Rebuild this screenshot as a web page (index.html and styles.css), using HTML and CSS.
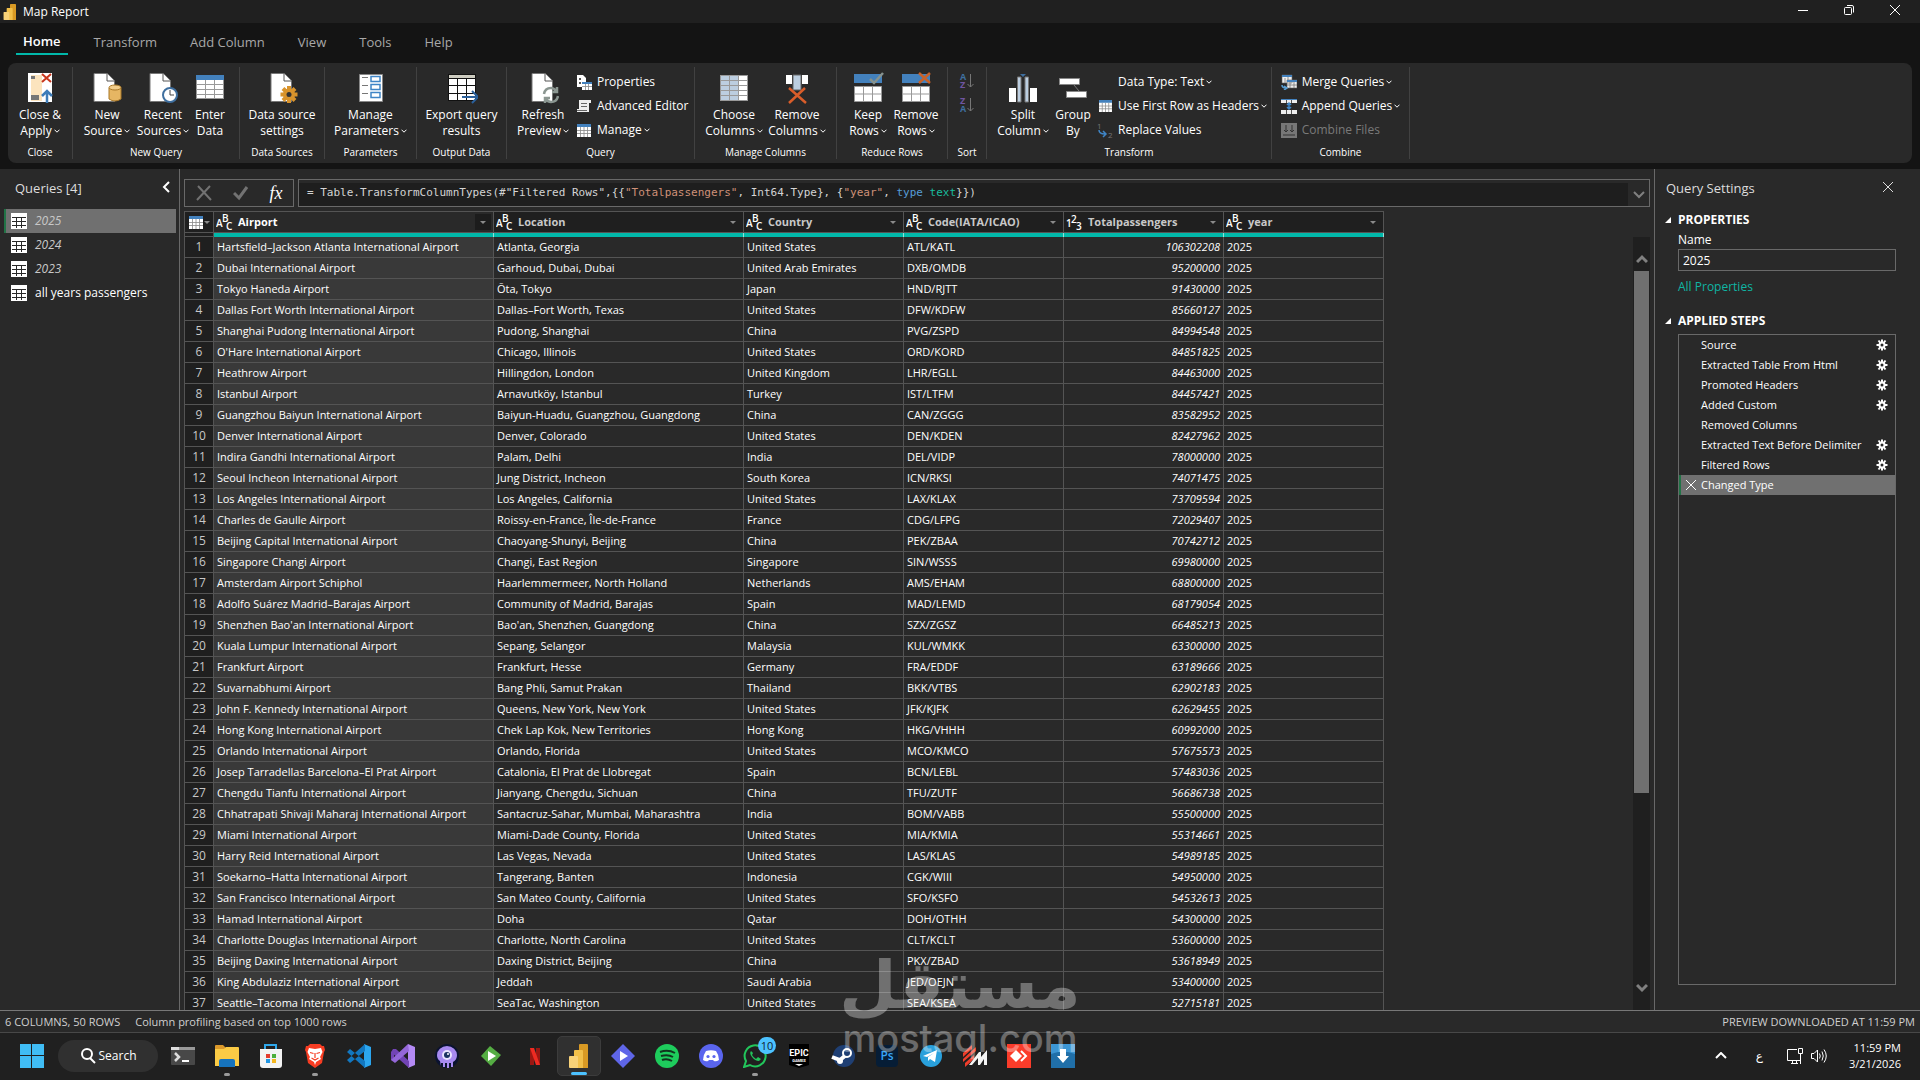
FILE: index.html
```html
<!DOCTYPE html>
<html lang="en">
<head>
<meta charset="utf-8">
<meta name="viewport" content="width=device-width, initial-scale=1">
<title>Map Report</title>
<link rel="stylesheet" href="styles.css">
</head>
<body>
<svg class="defs" aria-hidden="true">
  <symbol id="chev" viewBox="0 0 6 4"><path d="M.5 .7 3 3.2 5.5 .7" fill="none" stroke="currentColor"/></symbol>
  <symbol id="page" viewBox="0 0 32 32"><path d="M2 1.500H15L22.500 9V29.500H2z" fill="#fff" stroke="#777"/><path d="M15 1.500V9H22.500" fill="#fff" stroke="#555"/></symbol>
  <symbol id="grid" viewBox="0 0 16 16"><path d="M0 0H16V16H0z" fill="#fff"/><path d="M1 4.500H15M1 8.500H15M1 12.500H15M5.500 4V15M10.500 4V15" stroke="#292929" fill="none"/></symbol>
  <symbol id="bluegrid" viewBox="0 0 14 13"><path d="M0 0H14V13H0z" fill="#fff"/><path d="M0 0H14V3H0z" fill="#4381bd"/><path d="M0 6.500H14M0 9.500H14M3.500 3V13M7 3V13M10.500 3V13" stroke="#888" stroke-width=".8"/></symbol>
  <symbol id="gear" viewBox="0 0 12 12"><path d="M6 .5V11.500M.5 6H11.500M2.500 1.500 9.500 10.500M9.500 1.500 2.500 10.500" stroke="#fff" stroke-width="2"/><circle cx="6" cy="6" r="3.500" fill="#fff"/><circle cx="6" cy="6" r="1.500" fill="#292929"/></symbol>
  <symbol id="cross" viewBox="0 0 12 12"><path d="M1 1 11 11M11 1 1 11" stroke="currentColor" fill="none"/></symbol>
  <symbol id="pbi" viewBox="0 0 20 24"><path d="M10 1q0-1 1-1h7q1 0 1 1v23h-9z" fill="#d99a24"/><path d="M5 7q0-1 1-1h7q1 0 1 1v17H5z" fill="#f2c04a"/><path d="M0 13q0-1 1-1h7q1 0 1 1v11H1q-1 0-1-1z" fill="#f8d278"/></symbol>
</svg>

<header class="titlebar">
  <svg class="app-icon" viewBox="0 0 20 24"><use href="#pbi"/></svg>
  <h1>Map Report</h1>
  <div class="winbtns">
    <button aria-label="Minimize"><svg width="12" height="12"><path d="M1 6.500H11" stroke="#fff"/></svg></button>
    <button aria-label="Restore"><svg width="12" height="12" fill="none" stroke="#fff"><rect x="1.500" y="3.500" width="7" height="7" rx="1"/><path d="M4 1.500H9q1.500 0 1.500 1.500V8.500"/></svg></button>
    <button aria-label="Close"><svg width="12" height="12"><use href="#cross"/></svg></button>
  </div>
</header>

<nav class="tabs">
  <button class="tab active">Home</button><button class="tab">Transform</button><button class="tab">Add Column</button><button class="tab">View</button><button class="tab">Tools</button><button class="tab">Help</button>
</nav>

<section class="ribbon">
  <div class="group g-close"><div class="tools">
    <button class="big"><svg viewBox="0 0 32 32"><path d="M4 1H28V30H4z" fill="#fff"/><path d="M7 3H18V29H7z" fill="#fce4be"/><path d="M7 4H11V7H7zM7 23H15V28H7z" fill="#777"/><path d="M18 2 27 10M27 2 18 10" stroke="#c8361c" stroke-width="2"/><path d="M23 31V20M18 24 23 19 28 24" stroke="#3e7cb8" stroke-width="2.500" fill="none"/></svg><span>Close &amp;<br>Apply<svg class="chev"><use href="#chev"/></svg></span></button>
  </div><h2>Close</h2></div>

  <div class="group g-new"><div class="tools">
    <button class="big"><svg viewBox="0 0 32 32"><use href="#page" x="1" y="0"/><path d="M18 16V27q6 4 12 0V16z" fill="#e6b663" stroke="#a97828"/><ellipse cx="24" cy="15.500" rx="6" ry="2.500" fill="#f2cd8a" stroke="#a97828"/></svg><span>New<br>Source<svg class="chev"><use href="#chev"/></svg></span></button>
    <button class="big"><svg viewBox="0 0 32 32"><use href="#page" x="1" y="0"/><circle cx="23" cy="23" r="7" fill="#fff" stroke="#3f6f9f" stroke-width="2"/><path d="M23 18V23H27" stroke="#444" fill="none"/></svg><span>Recent<br>Sources<svg class="chev"><use href="#chev"/></svg></span></button>
    <button class="big narrow"><svg viewBox="0 0 32 32"><path d="M2 3H30V27H2z" fill="#fff"/><path d="M2 3H30V8H2z" fill="#4381bd"/><path d="M2 12.500H30M2 17.500H30M2 22.500H30M11.500 8V27M20.500 8V27M2.500 8V27M29.500 8V27M2 26.500H30" stroke="#999"/></svg><span>Enter<br>Data</span></button>
  </div><h2>New Query</h2></div>

  <div class="group g-ds"><div class="tools">
    <button class="big wide"><svg viewBox="0 0 32 32"><use href="#page" x="3" y="0"/><path d="M23 14V31M14.500 22.500H31.500M17 16.500 29 28.500M29 16.500 17 28.500" stroke="#d8932c" stroke-width="4"/><circle cx="23" cy="22.500" r="6" fill="#d8932c"/><circle cx="23" cy="22.500" r="2.500" fill="#333"/></svg><span>Data source<br>settings</span></button>
  </div><h2>Data Sources</h2></div>

  <div class="group g-par"><div class="tools">
    <button class="big wide"><svg viewBox="0 0 32 32"><path d="M4.500 2.500H27.500V29.500H4.500z" fill="#fff" stroke="#888"/><path d="M7 5.500H13M7 13.500H13M7 21.500H13" stroke="#777"/><path d="M16 4.500H25V9.500H16zM16 12.500H25V17.500H16zM16 20.500H25V25.500H16z" fill="none" stroke="#3f85c6" stroke-width="1.500"/></svg><span>Manage<br>Parameters<svg class="chev"><use href="#chev"/></svg></span></button>
  </div><h2>Parameters</h2></div>

  <div class="group g-out"><div class="tools">
    <button class="big wide"><svg viewBox="0 0 32 32"><path d="M2 2H30V29H2z" fill="#fff"/><path d="M2 3H30V6H2z" fill="#cdccc0"/><path d="M2 2.500H30M2 6.500H30M2 13.500H30M2 21.500H30M2 28.500H30M2.500 2V29M11.500 6V29M20.500 6V29M29.500 2V29" stroke="#111"/><path d="M16 25H31M26 19 32 25 26 31" stroke="#2a609c" stroke-width="2" fill="none"/></svg><span>Export query<br>results</span></button>
  </div><h2>Output Data</h2></div>

  <div class="group g-query"><div class="tools">
    <button class="big"><svg viewBox="0 0 32 32"><use href="#page" x="3" y="0"/><path d="M17 22q1-6 7-6 3 0 5 3M30 15V20H25M31 24q-1 6-7 6-3 0-5-3M18 31V26H23" stroke="#8b9691" stroke-width="2.500" fill="none"/></svg><span>Refresh<br>Preview<svg class="chev"><use href="#chev"/></svg></span></button>
    <div class="list">
      <button><svg viewBox="0 0 16 16"><path d="M1 1H7L10 4V13H1z" fill="#fff"/><path d="M3 5H5M3 9H5" stroke="#555" stroke-width="2"/><path d="M6 8H16V16H6z" fill="#fff"/><path d="M6 8H16V10H6z" fill="#4381bd"/><path d="M6 12.500H16M9.500 10V16M12.500 10V16" stroke="#888" stroke-width=".8"/></svg>Properties</button>
      <button><svg viewBox="0 0 16 16"><path d="M3 2H15V5H13V14H1V11H3z" fill="#eee"/><path d="M5 5.500H11M5 8.500H11M1 12.500H11" stroke="#666"/></svg>Advanced Editor</button>
      <button><svg viewBox="0 0 16 16"><use href="#bluegrid" x="1" y="2" width="14" height="13"/></svg>Manage<svg class="chev"><use href="#chev"/></svg></button>
    </div>
  </div><h2>Query</h2></div>

  <div class="group g-cols"><div class="tools">
    <button class="big"><svg viewBox="0 0 32 32"><path d="M2 3H30V29H2z" fill="#fff"/><path d="M2 3H20V29H2z" fill="#bccee0"/><path d="M2 3.500H30M2 8.500H30M2 13.500H30M2 18.500H30M2 23.500H30M2 28.500H30M2.500 3V29M11.500 3V29M20.500 3V29M29.500 3V29" stroke="#999"/></svg><span>Choose<br>Columns<svg class="chev"><use href="#chev"/></svg></span></button>
    <button class="big"><svg viewBox="0 0 32 32"><path d="M5 3H11V12H5zM21 3H27V12H21z" fill="#fff"/><path d="M12 3H20V18H12z" fill="#bccee0" stroke="#666"/><path d="M8 16 25 31M24 16 8 31" stroke="#d95d2a" stroke-width="2.500"/></svg><span>Remove<br>Columns<svg class="chev"><use href="#chev"/></svg></span></button>
  </div><h2>Manage Columns</h2></div>

  <div class="group g-rows"><div class="tools">
    <button class="big"><svg viewBox="0 0 32 32"><path d="M2 2H30V11H2z" fill="#4381bd"/><path d="M2.500 14.500H29.500V29.500H2.500zM2 22H30M11.500 14V30M20.500 14V30" fill="#fff" stroke="#999"/><path d="M18 7 22 11 31 1" stroke="#87938f" stroke-width="2.500" fill="none"/></svg><span>Keep<br>Rows<svg class="chev"><use href="#chev"/></svg></span></button>
    <button class="big"><svg viewBox="0 0 32 32"><path d="M2 2H30V11H2z" fill="#4381bd"/><path d="M2.500 14.500H29.500V29.500H2.500zM2 22H30M11.500 14V30M20.500 14V30" fill="#fff" stroke="#999"/><path d="M19 1 30 11M30 1 19 11" stroke="#c8622a" stroke-width="2.500"/></svg><span>Remove<br>Rows<svg class="chev"><use href="#chev"/></svg></span></button>
  </div><h2>Reduce Rows</h2></div>

  <div class="group g-sort"><div class="tools sort">
    <button aria-label="Sort ascending"><svg width="16" height="18" viewBox="0 0 16 18" font-family="Open Sans, sans-serif" font-size="9" font-weight="700"><text x="1" y="8" fill="#3f6f9f">A</text><text x="1" y="16" fill="#6f55a0">Z</text><path d="M11.500 2V15M8.500 12 11.500 15 14.500 12" stroke="#777" fill="none"/></svg></button>
    <button aria-label="Sort descending"><svg width="16" height="18" viewBox="0 0 16 18" font-family="Open Sans, sans-serif" font-size="9" font-weight="700"><text x="1" y="8" fill="#6f55a0">Z</text><text x="1" y="16" fill="#3f6f9f">A</text><path d="M11.500 2V15M8.500 12 11.500 15 14.500 12" stroke="#777" fill="none"/></svg></button>
  </div><h2>Sort</h2></div>

  <div class="group g-trans"><div class="tools">
    <button class="big"><svg viewBox="0 0 32 32"><path d="M2 16H9V30H2zM23 16H30V30H23z" fill="#fff"/><path d="M10.500 5H14V30H10.500zM18 5H21.500V30H18z" fill="#bccee0" stroke="#777"/><path d="M13 2H19L16 5z" fill="#3f6f9f"/></svg><span>Split<br>Column<svg class="chev"><use href="#chev"/></svg></span></button>
    <button class="big narrow"><svg viewBox="0 0 32 32"><path d="M2.500 6.500H22.500V12.500H2.500zM9.500 19.500H29.500V25.500H9.500z" fill="#fff" stroke="#888"/><path d="M17 13 22 19" stroke="#777"/></svg><span>Group<br>By</span></button>
    <div class="list">
      <button><svg viewBox="0 0 16 16"></svg>Data Type: Text<svg class="chev"><use href="#chev"/></svg></button>
      <button><svg viewBox="0 0 16 16"><use href="#bluegrid" x="2" y="2" width="13" height="12"/></svg>Use First Row as Headers<svg class="chev"><use href="#chev"/></svg></button>
      <button><svg viewBox="0 0 16 16"><g font-family="Open Sans, sans-serif" font-size="8" fill="#777"><text x="0" y="7">1</text><text x="11" y="16">2</text></g><path d="M2 8q0 4 6 4M6 9 9 12 6 15" stroke="#3f85c6" stroke-width="1.500" fill="none"/></svg>Replace Values</button>
    </div>
  </div><h2>Transform</h2></div>

  <div class="group g-comb"><div class="tools">
    <div class="list">
      <button><svg viewBox="0 0 16 16"><path d="M1 1H11V9H1zM6 6H16V14H6z" fill="#eee" stroke="#666" stroke-width=".6"/><path d="M1 1H11V3H1zM6 6H16V8H6z" fill="#4381bd"/><path d="M6 11H16M4 4V9M7 3V6M9 8V14M13 8V14" stroke="#777" stroke-width=".8"/><path d="M1 11q0 3 4 3M3 12 6 14 3 16" stroke="#5a9fd4" stroke-width="1.500" fill="none"/></svg>Merge Queries<svg class="chev"><use href="#chev"/></svg></button>
      <button><svg viewBox="0 0 16 16"><path d="M0 1H16V5H0zM0 12H16V16H0z" fill="#eee"/><path d="M0 1H16V2H0z" fill="#4381bd"/><path d="M5.500 2V5M10.500 2V5M5.500 12V16M10.500 12V16" stroke="#555"/><path d="M8 5V11M6 9 8 11 10 9M6 7 8 5 10 7" stroke="#3f85c6" stroke-width="1.500" fill="none"/></svg>Append Queries<svg class="chev"><use href="#chev"/></svg></button>
      <button class="off" disabled><svg viewBox="0 0 16 16"><path d="M0 1H16V16H0z" fill="#777"/><path d="M5 3V10M3 8 5 10 7 8M11 3V10M9 8 11 10 13 8M2 13H14" stroke="#333" fill="none"/></svg>Combine Files</button>
    </div>
  </div><h2>Combine</h2></div>
</section>

<main class="workspace">
  <aside class="queries">
    <div class="pane-head"><h2>Queries [4]</h2><button aria-label="Collapse"><svg width="8" height="12"><path d="M7 1 2 6 7 11" stroke="#fff" stroke-width="2" fill="none"/></svg></button></div>
    <ul>
      <li class="sel it"><svg><use href="#grid"/></svg>2025</li>
      <li class="it"><svg><use href="#grid"/></svg>2024</li>
      <li class="it"><svg><use href="#grid"/></svg>2023</li>
      <li><svg><use href="#grid"/></svg>all years passengers</li>
    </ul>
  </aside>

  <section class="editor">
    <div class="formula-row">
      <div class="fx-btns">
        <button aria-label="Cancel"><svg width="16" height="16"><path d="M2 1 15 15M14 1 1 15" stroke="#727272" stroke-width="2"/></svg></button>
        <button aria-label="Commit"><svg width="16" height="16"><path d="M1 8 6 13 14 2" stroke="#727272" stroke-width="3" fill="none"/></svg></button>
        <button class="fx">fx</button>
      </div>
      <div class="formula"><code>= Table.TransformColumnTypes(#"Filtered Rows",{{<i class="s">"Totalpassengers"</i>, Int64.Type}, {<i class="s">"year"</i>, <i class="k">type</i> <i class="t">text</i>}})</code><button aria-label="Expand"><svg width="12" height="8"><path d="M1 1 6 6 11 1" stroke="#808080" stroke-width="2" fill="none"/></svg></button></div>
    </div>
    <div class="grid-wrap">
      <table>
        <colgroup><col class="c-n"><col class="c-air"><col class="c-loc"><col class="c"><col class="c"><col class="c"><col class="c"></colgroup>
        <thead>
          <tr><th class="corner"><svg class="tbl" viewBox="0 0 14 13"><use href="#bluegrid"/></svg><i class="dd"></i></th>
          <th class="on"><div><svg class="ty" viewBox="0 0 17 17"><text x="0" y="13">A</text><text x="6" y="8">B</text><text x="10" y="16">C</text></svg>Airport<i class="dd"></i></div></th>
          <th><div><svg class="ty" viewBox="0 0 17 17"><text x="0" y="13">A</text><text x="6" y="8">B</text><text x="10" y="16">C</text></svg>Location<i class="dd"></i></div></th>
          <th><div><svg class="ty" viewBox="0 0 17 17"><text x="0" y="13">A</text><text x="6" y="8">B</text><text x="10" y="16">C</text></svg>Country<i class="dd"></i></div></th>
          <th><div><svg class="ty" viewBox="0 0 17 17"><text x="0" y="13">A</text><text x="6" y="8">B</text><text x="10" y="16">C</text></svg>Code(IATA/ICAO)<i class="dd"></i></div></th>
          <th><div><svg class="ty" viewBox="0 0 17 17"><text x="0" y="13">1</text><text x="5" y="9">2</text><text x="10" y="16">3</text></svg>Totalpassengers<i class="dd"></i></div></th>
          <th><div><svg class="ty" viewBox="0 0 17 17"><text x="0" y="13">A</text><text x="6" y="8">B</text><text x="10" y="16">C</text></svg>year<i class="dd"></i></div></th></tr>
          <tr class="band"><td><td><td><td><td><td><td></tr>
        </thead>
        <tbody>
<tr><td>1<td>Hartsfield–Jackson Atlanta International Airport<td>Atlanta, Georgia<td>United States<td>ATL/KATL<td>106302208<td>2025
<tr><td>2<td>Dubai International Airport<td>Garhoud, Dubai, Dubai<td>United Arab Emirates<td>DXB/OMDB<td>95200000<td>2025
<tr><td>3<td>Tokyo Haneda Airport<td>Ōta, Tokyo<td>Japan<td>HND/RJTT<td>91430000<td>2025
<tr><td>4<td>Dallas Fort Worth International Airport<td>Dallas–Fort Worth, Texas<td>United States<td>DFW/KDFW<td>85660127<td>2025
<tr><td>5<td>Shanghai Pudong International Airport<td>Pudong, Shanghai<td>China<td>PVG/ZSPD<td>84994548<td>2025
<tr><td>6<td>O'Hare International Airport<td>Chicago, Illinois<td>United States<td>ORD/KORD<td>84851825<td>2025
<tr><td>7<td>Heathrow Airport<td>Hillingdon, London<td>United Kingdom<td>LHR/EGLL<td>84463000<td>2025
<tr><td>8<td>Istanbul Airport<td>Arnavutköy, Istanbul<td>Turkey<td>IST/LTFM<td>84457421<td>2025
<tr><td>9<td>Guangzhou Baiyun International Airport<td>Baiyun-Huadu, Guangzhou, Guangdong<td>China<td>CAN/ZGGG<td>83582952<td>2025
<tr><td>10<td>Denver International Airport<td>Denver, Colorado<td>United States<td>DEN/KDEN<td>82427962<td>2025
<tr><td>11<td>Indira Gandhi International Airport<td>Palam, Delhi<td>India<td>DEL/VIDP<td>78000000<td>2025
<tr><td>12<td>Seoul Incheon International Airport<td>Jung District, Incheon<td>South Korea<td>ICN/RKSI<td>74071475<td>2025
<tr><td>13<td>Los Angeles International Airport<td>Los Angeles, California<td>United States<td>LAX/KLAX<td>73709594<td>2025
<tr><td>14<td>Charles de Gaulle Airport<td>Roissy-en-France, Île-de-France<td>France<td>CDG/LFPG<td>72029407<td>2025
<tr><td>15<td>Beijing Capital International Airport<td>Chaoyang-Shunyi, Beijing<td>China<td>PEK/ZBAA<td>70742712<td>2025
<tr><td>16<td>Singapore Changi Airport<td>Changi, East Region<td>Singapore<td>SIN/WSSS<td>69980000<td>2025
<tr><td>17<td>Amsterdam Airport Schiphol<td>Haarlemmermeer, North Holland<td>Netherlands<td>AMS/EHAM<td>68800000<td>2025
<tr><td>18<td>Adolfo Suárez Madrid–Barajas Airport<td>Community of Madrid, Barajas<td>Spain<td>MAD/LEMD<td>68179054<td>2025
<tr><td>19<td>Shenzhen Bao'an International Airport<td>Bao'an, Shenzhen, Guangdong<td>China<td>SZX/ZGSZ<td>66485213<td>2025
<tr><td>20<td>Kuala Lumpur International Airport<td>Sepang, Selangor<td>Malaysia<td>KUL/WMKK<td>63300000<td>2025
<tr><td>21<td>Frankfurt Airport<td>Frankfurt, Hesse<td>Germany<td>FRA/EDDF<td>63189666<td>2025
<tr><td>22<td>Suvarnabhumi Airport<td>Bang Phli, Samut Prakan<td>Thailand<td>BKK/VTBS<td>62902183<td>2025
<tr><td>23<td>John F. Kennedy International Airport<td>Queens, New York, New York<td>United States<td>JFK/KJFK<td>62629455<td>2025
<tr><td>24<td>Hong Kong International Airport<td>Chek Lap Kok, New Territories<td>Hong Kong<td>HKG/VHHH<td>60992000<td>2025
<tr><td>25<td>Orlando International Airport<td>Orlando, Florida<td>United States<td>MCO/KMCO<td>57675573<td>2025
<tr><td>26<td>Josep Tarradellas Barcelona–El Prat Airport<td>Catalonia, El Prat de Llobregat<td>Spain<td>BCN/LEBL<td>57483036<td>2025
<tr><td>27<td>Chengdu Tianfu International Airport<td>Jianyang, Chengdu, Sichuan<td>China<td>TFU/ZUTF<td>56686738<td>2025
<tr><td>28<td>Chhatrapati Shivaji Maharaj International Airport<td>Santacruz-Sahar, Mumbai, Maharashtra<td>India<td>BOM/VABB<td>55500000<td>2025
<tr><td>29<td>Miami International Airport<td>Miami-Dade County, Florida<td>United States<td>MIA/KMIA<td>55314661<td>2025
<tr><td>30<td>Harry Reid International Airport<td>Las Vegas, Nevada<td>United States<td>LAS/KLAS<td>54989185<td>2025
<tr><td>31<td>Soekarno–Hatta International Airport<td>Tangerang, Banten<td>Indonesia<td>CGK/WIII<td>54950000<td>2025
<tr><td>32<td>San Francisco International Airport<td>San Mateo County, California<td>United States<td>SFO/KSFO<td>54532613<td>2025
<tr><td>33<td>Hamad International Airport<td>Doha<td>Qatar<td>DOH/OTHH<td>54300000<td>2025
<tr><td>34<td>Charlotte Douglas International Airport<td>Charlotte, North Carolina<td>United States<td>CLT/KCLT<td>53600000<td>2025
<tr><td>35<td>Beijing Daxing International Airport<td>Daxing District, Beijing<td>China<td>PKX/ZBAD<td>53618949<td>2025
<tr><td>36<td>King Abdulaziz International Airport<td>Jeddah<td>Saudi Arabia<td>JED/OEJN<td>53400000<td>2025
<tr><td>37<td>Seattle–Tacoma International Airport<td>SeaTac, Washington<td>United States<td>SEA/KSEA<td>52715181<td>2025
        </tbody>
      </table>
      <div class="scrollbar"><svg width="12" height="10"><path d="M1 8 6 3 11 8" stroke="#808080" stroke-width="3" fill="none"/></svg><div class="track"><div class="thumb"></div></div><svg width="12" height="10"><path d="M1 2 6 7 11 2" stroke="#808080" stroke-width="3" fill="none"/></svg></div>
    </div>
  </section>

  <aside class="settings">
    <div class="pane-head"><h2>Query Settings</h2><button aria-label="Close pane"><svg width="12" height="12"><use href="#cross"/></svg></button></div>
    <h3>PROPERTIES</h3>
    <label for="qname">Name</label>
    <input id="qname" value="2025">
    <a href="#all">All Properties</a>
    <h3>APPLIED STEPS</h3>
    <ol>
      <li>Source<svg><use href="#gear"/></svg></li>
      <li>Extracted Table From Html<svg><use href="#gear"/></svg></li>
      <li>Promoted Headers<svg><use href="#gear"/></svg></li>
      <li>Added Custom<svg><use href="#gear"/></svg></li>
      <li>Removed Columns</li>
      <li>Extracted Text Before Delimiter<svg><use href="#gear"/></svg></li>
      <li>Filtered Rows<svg><use href="#gear"/></svg></li>
      <li class="sel"><svg class="del"><use href="#cross"/></svg>Changed Type</li>
    </ol>
  </aside>
</main>

<footer class="status"><span>6 COLUMNS, 50 ROWS</span><span>Column profiling based on top 1000 rows</span><span class="right">PREVIEW DOWNLOADED AT 11:59 PM</span></footer>

<footer class="taskbar">
  <button class="start" aria-label="Start"><svg width="24" height="24" fill="#40bdf5"><path d="M0 0H11V11H0zM12 0H24V11H12zM0 12H11V24H0zM12 12H24V24H12z"/></svg></button>
  <button class="search"><svg width="16" height="18" fill="none" stroke="#fff" stroke-width="2"><circle cx="7" cy="7" r="5"/><path d="M10 11 15 16"/></svg>Search</button>
  <div class="apps">
    <button aria-label="Terminal"><svg viewBox="0 0 24 24"><rect y="3" width="24" height="18" rx="1" fill="#484848"/><path d="M0 3H24V6H0z" fill="#999"/><path d="M0 3H8V6H0z" fill="#ddd"/><path d="M4 9 8 13 4 17" stroke="#ddd" stroke-width="2.500" fill="none"/><path d="M11 17H18" stroke="#fff" stroke-width="2"/></svg></button>
    <button aria-label="File Explorer" class="run"><svg viewBox="0 0 24 24"><path d="M0 2q0-1 1-1H8L11 4V9H0z" fill="#dc9a2c"/><path d="M0 5H9L11 3H23q1 0 1 1V22H0z" fill="#fbcb45"/><path d="M4 23V17q0-2 2-2H18q2 0 2 2V23z" fill="#1673bd"/></svg></button>
    <button aria-label="Store"><svg viewBox="0 0 24 24"><path d="M6 6V1H17V6" stroke="#2fa7ea" stroke-width="2" fill="none"/><path d="M1 5H23V21q0 3-3 3H4q-3 0-3-3z" fill="#f3f3f3"/><path d="M7 10H11V14H7z" fill="#e33d2f"/><path d="M13 10H17V14H13z" fill="#4caf3c"/><path d="M7 15H11V19H7z" fill="#2196e3"/><path d="M13 15H17V19H13z" fill="#f5b71e"/></svg></button>
    <button aria-label="Brave" class="run"><svg viewBox="0 0 24 24"><path d="M7 0H17L19 2 21 2 22 6 21 8 19 19 12 24 5 19 3 8 2 6 3 2 5 2z" fill="#f73c22"/><path d="M6 4 12 5 18 4 19.500 8 17 13 18 15 13 18 12 21 11 18 6 15 7 13 4.500 8z" fill="#fff"/><path d="M7 8.500 10.500 9.500M17 8.500 13.500 9.500M12 9V14M8.500 14 12 16 15.500 14" stroke="#f73c22" stroke-width="1.200" fill="none"/></svg></button>
    <button aria-label="VS Code"><svg viewBox="0 0 24 24"><path d="M17 0 24 3V21L17 24z" fill="#2ba6ef"/><path d="M18 0V7L3 19 0 16zM18 24V17L3 5 0 8z" fill="#1277c0"/></svg></button>
    <button aria-label="Visual Studio"><svg viewBox="0 0 24 24"><path d="M17 0 24 3V21L17 24z" fill="#b48af5"/><path d="M2 5 5 5 18 17V24L0 8zM0 8 3 7V17L0 16z" fill="#7244b5"/><path d="M17 0 18 7 4 19 0 16z" fill="#9467d8"/></svg></button>
    <button aria-label="Octopus"><svg viewBox="0 0 24 24"><circle cx="12" cy="12" r="12" fill="#0b1330"/><path d="M2 11a10 9 0 0 1 20 0q0 5-4 7V23H16V19H14V24H12V19H10V23H8V19H6V22L5 17Q2 15 2 11z" fill="#a78af0"/><circle cx="12" cy="11" r="5" fill="#e9e4ff"/><circle cx="12" cy="11" r="3" fill="#1a3361"/><circle cx="13" cy="10" r="1" fill="#fff"/></svg></button>
    <button aria-label="Player"><svg viewBox="0 0 24 24"><path d="M11 2 22 11 12 22 2 12z" fill="#55ad43"/><path d="M9 7 17 12 9 17z" fill="#fff"/></svg></button>
    <button aria-label="Netflix"><svg viewBox="0 0 24 24"><path d="M7 4H11V21H7zM13 4H17V21H13z" fill="#9b1712"/><path d="M7 4H11L17 21H13z" fill="#ef2b22"/></svg></button>
    <button aria-label="Power BI" class="cur"><svg viewBox="0 0 20 24"><use href="#pbi"/></svg></button>
    <button aria-label="Media"><svg viewBox="0 0 24 24"><path d="M12 0 24 12 12 24 0 12z" fill="#5f66e8"/><path d="M9 7 17 12 9 17z" fill="#fff"/></svg></button>
    <button aria-label="Spotify"><svg viewBox="0 0 24 24"><circle cx="12" cy="12" r="12" fill="#1ecc5c"/><path d="M5 8Q13 5 20 9M6 12Q13 10 18 13M7 16Q12 14 17 17" stroke="#12351f" stroke-width="2" fill="none"/></svg></button>
    <button aria-label="Discord"><svg viewBox="0 0 24 24"><circle cx="12" cy="12" r="12" fill="#5a65ee"/><path d="M7 7Q12 5.500 17 7 20 11 20 16 17 18 15 17L14 16H10L9 17Q7 18 4 16 4 11 7 7z" fill="#fff"/><circle cx="9" cy="12.500" r="1.600" fill="#5a65ee"/><circle cx="15" cy="12.500" r="1.600" fill="#5a65ee"/></svg></button>
    <button aria-label="WhatsApp" class="run"><svg viewBox="0 0 24 24"><path d="M1 23 3 17A10.500 10.500 0 1 1 7 21z" fill="none" stroke="#22c65b" stroke-width="2"/><path d="M8 7Q6 9 9 13T16 17L18 15 15 13 13 15Q10 13 9 11L10 9z" fill="#22c65b"/></svg><b>10</b></button>
    <button aria-label="Epic Games"><svg viewBox="0 0 24 24"><path d="M2 0H22V21L12 24 2 21z" fill="#000"/><text x="12" y="12" text-anchor="middle" font-family="Roboto, sans-serif" font-weight="700" font-size="9" fill="#fff">EPIC</text><text x="12" y="18" text-anchor="middle" font-family="Roboto, sans-serif" font-weight="700" font-size="4" fill="#fff">GAMES</text><path d="M8 20H16L12 22z" fill="#fff"/></svg></button>
    <button aria-label="Steam"><svg viewBox="0 0 24 24"><circle cx="13" cy="12" r="11" fill="#1f3f73"/><path d="M1 13 9 16 15 11" stroke="#fff" stroke-width="4" fill="none"/><circle cx="16" cy="9" r="4" fill="#1f3f73" stroke="#fff" stroke-width="2"/><circle cx="9" cy="17" r="3" fill="#fff"/></svg></button>
    <button aria-label="Photoshop"><svg viewBox="0 0 24 24"><rect x="1" y="1" width="22" height="22" rx="4" fill="#061d36"/><text x="12" y="16" text-anchor="middle" font-family="Open Sans, sans-serif" font-weight="600" font-size="12" fill="#38a5f7">Ps</text></svg></button>
    <button aria-label="Telegram"><svg viewBox="0 0 24 24"><circle cx="12" cy="12" r="11" fill="#29a0dc"/><path d="M4 12 18 6 16 18 11 15 9 17 9 13 15 9 8 13z" fill="#fff"/></svg></button>
    <button aria-label="Editor"><svg viewBox="0 0 24 24"><path d="M9 1 0 9V13L9 5zM13 3 0 15V18L13 7zM11 11 2 19V23L11 15z" fill="#ef3e2b"/><path d="M16 8 6 21H9L15 14V21H17L21 15V21H24V6L18 13V8z" fill="#f5f5f5"/></svg></button>
    <button aria-label="AnyDesk"><svg viewBox="0 0 24 24"><path d="M0 0H24V24H0z" fill="#fb3c2a"/><path d="M9 6 15 12 9 18 3 12z" fill="#fff"/><path d="M14 7 19 12 14 17" fill="none" stroke="#fff" stroke-width="2"/></svg></button>
    <button aria-label="Downloader"><svg viewBox="0 0 24 24"><path d="M0 0H24V24H0z" fill="#206fa8"/><path d="M0 0H24V10Q12 5 0 10z" fill="#3c96d4"/><path d="M9 5H15V12H18L12 19 6 12H9z" fill="#fff"/></svg></button>
  </div>
  <div class="tray">
    <svg class="up" width="12" height="8"><path d="M1 6 6 1 11 6" stroke="#fff" stroke-width="2" fill="none"/></svg>
    <span class="lang" lang="ar">ع</span>
    <svg class="net" width="18" height="18" fill="none" stroke="#fff"><path d="M11 2.500H1.500V13.500H14.500V9M5 16.500H12M6.500 14V16M10.500 14V16"/><path d="M12.500 1.500H16.500V6.500H12.500zM14.500 7V17"/></svg>
    <svg class="vol" width="18" height="16" fill="none" stroke="#fff"><path d="M1.500 5.500H4L7.500 2V14L4 10.500H1.500zM9.500 5.500Q11 8 9.500 10.500M12 3.500Q14.500 8 12 12.500M14 1.500Q18.500 8 14 14.500"/></svg>
    <time><span>11:59 PM</span><span>3/21/2026</span></time>
  </div>
</footer>

<div class="watermark" aria-hidden="true"><span lang="ar" dir="rtl">مستقل</span><span>mostaql.com</span></div>
</body>
</html>
```
FILE: styles.css
```css
* { box-sizing: border-box; }
html, body { height: 100%; }
body {
  margin: 0;
  display: flex;
  flex-direction: column;
  overflow: hidden;
  background: #141414;
  color: #fff;
  font: 12px/16px "Open Sans", "Noto Sans", sans-serif;
}
h1, h2, h3, ul, ol { margin: 0; padding: 0; font: inherit; list-style: none; }
button { background: none; border: 0; padding: 0; margin: 0; color: inherit; font: inherit; }
i { font-style: normal; }
.defs { position: absolute; width: 0; height: 0; }

/* title bar */
.titlebar { display: flex; align-items: center; height: 23px; background: #202020; flex: none; }
.app-icon { width: 14px; height: 16px; margin: 0 6px 0 3px; }
.titlebar h1 { flex: 1; font-size: 12px; }
.winbtns { display: flex; padding-right: 2px; }
.winbtns button { width: 46px; height: 20px; }

/* tabs */
.tabs { display: flex; height: 40px; flex: none; padding: 6px 0 0 16px; gap: 19px; }
.tab { height: 26px; padding: 0 7px; font-size: 13px; color: #a8a8a8; }
.tab.active { color: #fff; font-weight: 600; border-bottom: 2px solid #01b8aa; }

/* ribbon */
.ribbon { display: flex; flex: none; height: 100px; margin: 0 8px 6px; padding: 4px 0; background: #292929; border-radius: 8px; }
.group { display: flex; flex-direction: column; border-right: 1px solid #414141; }
.group h2 { height: 14px; text-align: center; font-size: 10px; line-height: 14px; }
.tools { display: flex; justify-content: center; height: 78px; }
.big { display: flex; flex-direction: column; align-items: center; width: 56px; padding-top: 5px; white-space: nowrap; }
.big > svg { width: 32px; height: 32px; }
.big span { padding-top: 3px; line-height: 16px; }
.narrow { width: 38px; }
.wide { width: 80px; }
.chev { width: 6px; height: 4px; margin: 0 0 2px 2px; }
.list { display: flex; flex-direction: column; gap: 8px; padding-top: 7px; white-space: nowrap; }
.list button { display: flex; align-items: center; height: 16px; }
.list button > svg:first-child { width: 16px; height: 16px; margin-right: 5px; }
.list .chev { margin: 0 0 0 2px; }
.off { color: #7a7a7a; }
.g-close { width: 65px; } .g-new { width: 167px; } .g-ds { width: 85px; } .g-par { width: 92px; }
.g-out { width: 90px; } .g-query { width: 188px; } .g-cols { width: 142px; } .g-rows { width: 111px; }
.g-sort { width: 39px; } .g-trans { width: 285px; } .g-comb { width: 138px; }
.g-new .tools { justify-content: flex-start; padding-left: 6px; }
.g-query .tools { justify-content: flex-start; gap: 5px; padding-left: 8px; }
.g-cols .big { width: 63px; }
.g-rows .big { width: 48px; }
.g-trans .tools { justify-content: flex-start; padding-left: 8px; }
.g-trans .narrow { width: 44px; margin-right: 2px; }
.sort { flex-direction: column; justify-content: flex-start; align-items: center; gap: 6px; padding-top: 5px; }
.sort button, .sort svg { display: block; height: 18px; }

/* workspace */
.workspace { display: flex; flex: 1; min-height: 0; background: #292929; }
.pane-head { display: flex; align-items: center; justify-content: space-between; height: 37px; font-size: 13px; color: #ddd; }
.queries { width: 180px; flex: none; border-right: 1px solid #696969; }
.queries .pane-head { padding: 0 9px 0 15px; }
.queries ul { padding: 3px 3px 0 4px; }
.queries li { display: flex; align-items: center; height: 24px; padding-left: 7px; }
.queries li svg { width: 16px; height: 16px; margin-right: 8px; }
.queries .it { font-style: italic; color: #c8c8c8; }
.sel { background: #707070; box-shadow: inset 2px 0 #217346; }

.editor { flex: 1; min-width: 0; display: flex; flex-direction: column; padding: 10px 4px 0; }
.formula-row { display: flex; gap: 4px; height: 28px; flex: none; }
.fx-btns { display: flex; align-items: center; justify-content: space-around; width: 110px; border: 1px solid #696969; }
.fx-btns button { height: 16px; }
.fx-btns .fx { font: italic 18px/16px "Liberation Serif", serif; }
.formula { flex: 1; display: flex; align-items: center; border: 1px solid #696969; padding-top: 3px; }
.formula code { flex: 1; align-self: stretch; padding: 2px 8px; background: #1e1e1e; font: 11px/16px "DejaVu Sans Mono", monospace; color: #d4d4d4; }
.formula button { width: 21px; height: 16px; line-height: 8px; }
.s { color: #ce9178; } .k { color: #569cd6; } .t { color: #1abc9c; }

.grid-wrap { display: flex; justify-content: space-between; flex: 1; min-height: 0; padding-top: 4px; overflow: hidden; }
table { table-layout: fixed; width: 1200px; border-collapse: separate; border-spacing: 0; border: 1px solid #545454; border-width: 1px 0 0 1px; align-self: flex-start; font-size: 11px; line-height: 16px; }
.c-n { width: 29px; } .c-air { width: 280px; } .c-loc { width: 250px; } .c { width: 160px; }
th, td { height: 21px; padding: 0 3px; border: solid #545454; border-width: 0 1px 1px 0; text-align: left; white-space: nowrap; overflow: hidden; }
th { background: #1f1f1f; padding: 0 2px; color: #c8c8c8; }
th.on { background: #292929; color: #fff; }
th div { display: flex; align-items: center; height: 20px; }
.ty { width: 17px; height: 17px; margin-right: 5px; fill: #fff; font-size: 10px; font-weight: 600; }
.dd { margin-left: auto; width: 16px; height: 16px; display: flex; align-items: center; justify-content: center; }
.dd::after { content: ""; border: 3px solid transparent; border-top-color: #8a8a8a; border-bottom: 0; }
.on .dd { background: #1c1c1c; }
.corner { padding: 0 0 0 4px; }
.corner svg { width: 14px; height: 13px; vertical-align: middle; }
.corner .dd { display: inline-flex; width: 8px; vertical-align: middle; }
.band td { height: 4px; padding: 0; border-bottom: 0; background: #01b8aa; border-right-color: #9adcd6; }
.band td:first-child { background: #1f1f1f; border-right-color: #545454; border-bottom: 1px solid #545454; }
tbody td:first-child { background: #1f1f1f; color: #c8c8c8; text-align: center; font-size: 12px; padding: 0; }
tbody td:nth-child(2) { background: #393939; }
tbody td:nth-child(6) { text-align: right; font-style: italic; }

.scrollbar { display: flex; flex-direction: column; align-items: center; width: 17px; margin-top: 26px; padding: 17px 1px; background: #1f1f1f; }
.track { flex: 1; width: 100%; padding: 7px 0; }
.thumb { width: 100%; height: 74%; background: #707070; }

.settings { width: 266px; flex: none; display: flex; flex-direction: column; border-left: 1px solid #696969; padding: 0 24px 25px 23px; }
.settings .pane-head { margin-left: -12px; padding-right: 2px; }
.settings h3 { position: relative; font-weight: 700; line-height: 18px; margin-top: 5px; }
.settings h3::before { content: ""; position: absolute; left: -13px; top: 6px; border: 3px solid #fff; border-top-color: transparent; border-left-color: transparent; }
.settings label { margin-top: 3px; line-height: 16px; }
.settings input { width: 100%; height: 22px; margin-top: 1px; padding: 0 4px; border: 1px solid #696969; background: #292929; color: #fff; font: inherit; }
.settings a { color: #0fb5a4; text-decoration: none; margin: 8px 0 12px; }
.settings ol { flex: 1; border: 1px solid #696969; margin-top: 4px; font-size: 11px; white-space: nowrap; }
.settings li { display: flex; align-items: center; justify-content: space-between; height: 20px; padding: 0 7px 0 22px; }
.settings li svg { width: 12px; height: 12px; }
.settings li.sel { justify-content: flex-start; padding-left: 6px; }
.settings li .del { width: 12px; margin-right: 4px; }

/* status bar */
.status { display: flex; align-items: center; gap: 15px; height: 23px; flex: none; padding: 0 5px; background: #292929; border-top: 1px solid #777; border-bottom: 1px solid #484848; color: #d0d0d0; font-size: 11px; }
.status .right { margin-left: auto; }

/* taskbar */
.taskbar { display: flex; align-items: center; height: 47px; flex: none; padding-bottom: 1px; background: #202020; }
.start { width: 24px; height: 24px; margin: 0 14px 0 20px; }
.search { display: flex; align-items: center; justify-content: center; gap: 3px; width: 100px; height: 32px; margin-right: 3px; border-radius: 16px; background: #303030; }
.apps { display: flex; }
.apps button { position: relative; width: 44px; height: 40px; }
.apps button > svg { display: block; width: 24px; height: 24px; margin: 0 auto; }
.run::after, .cur::after { content: ""; position: absolute; left: 19px; bottom: 0; width: 6px; height: 3px; border-radius: 2px; background: #9a9a9a; }
.apps .cur { background: #303030; border: 1px solid #3c3c3c; border-radius: 5px; }
.cur::after { left: 13px; width: 16px; background: #4cc2ff; }
.apps b { position: absolute; right: 1px; top: 1px; width: 18px; height: 17px; border-radius: 9px; background: #4cc2ff; color: #123; font-weight: 400; font-size: 11px; line-height: 17px; }
.tray { display: flex; align-items: center; margin-left: auto; padding-right: 19px; }
.up { margin-right: 29px; }
.lang { margin-right: 23px; font-family: "DejaVu Sans", sans-serif; }
.net { margin-right: 6px; }
.vol { margin-right: 15px; }
.tray time { display: flex; flex-direction: column; text-align: right; width: 58px; font-size: 11px; }

/* watermark laid over the page */
.watermark { position: absolute; left: 44%; bottom: 20px; width: 12%; display: flex; flex-direction: column; align-items: center; color: #fff; opacity: .33; pointer-events: none; font: 500 38px/44px "Inter", sans-serif; }
.watermark span:first-child { font: 700 66px/60px "DejaVu Sans", sans-serif; }
```
